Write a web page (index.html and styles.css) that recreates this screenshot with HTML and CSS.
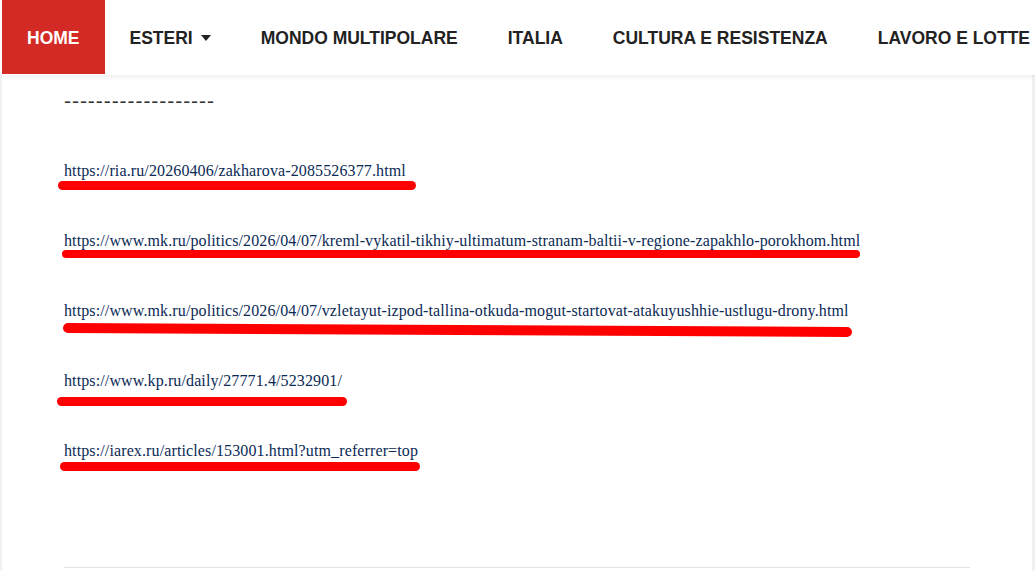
FILE: index.html
```html
<!DOCTYPE html>
<html lang="it">
<head>
    <meta charset="UTF-8">
    <meta name="viewport" content="width=device-width, initial-scale=1.0">
    <title>Fonti</title>
    <link rel="stylesheet" href="styles.css">
</head>
<body>
    <header class="topbar">
        <nav class="menu">
            <a class="menu-item active" href="#">HOME</a>
            <a class="menu-item" href="#">ESTERI <span class="caret"></span></a>
            <a class="menu-item" href="#">MONDO MULTIPOLARE</a>
            <a class="menu-item" href="#">ITALIA</a>
            <a class="menu-item" href="#">CULTURA E RESISTENZA</a>
            <a class="menu-item" href="#">LAVORO E LOTTE</a>
        </nav>
    </header>

    <main class="page">
        <article class="post">
            <p class="divider">-------------------</p>

            <ul class="sources">
                <li class="source">
                    <a href="#">https://ria.ru/20260406/zakharova-2085526377.html</a>
                    <span class="mark mark-1"></span>
                </li>
                <li class="source">
                    <a href="#">https://www.mk.ru/politics/2026/04/07/kreml-vykatil-tikhiy-ultimatum-stranam-baltii-v-regione-zapakhlo-porokhom.html</a>
                    <span class="mark mark-2"></span>
                </li>
                <li class="source">
                    <a href="#">https://www.mk.ru/politics/2026/04/07/vzletayut-izpod-tallina-otkuda-mogut-startovat-atakuyushhie-ustlugu-drony.html</a>
                    <span class="mark mark-3"></span>
                </li>
                <li class="source">
                    <a href="#">https://www.kp.ru/daily/27771.4/5232901/</a>
                    <span class="mark mark-4"></span>
                </li>
                <li class="source">
                    <a href="#">https://iarex.ru/articles/153001.html?utm_referrer=top</a>
                    <span class="mark mark-5"></span>
                </li>
            </ul>

            <hr class="post-end">
        </article>
    </main>
</body>
</html>
```

FILE: styles.css
```css
/* General Reset */
* {
    margin: 0;
    padding: 0;
    box-sizing: border-box;
}

body {
    font-family: 'Liberation Sans', Arial, sans-serif;
    background-color: #f1f1f4;
    color: #333;
    overflow: hidden;
}

/* Top menu */
.topbar {
    background: #fff;
    height: 75px;
    padding-left: 2px;
    box-shadow: 0 2px 5px rgba(0, 0, 0, 0.07);
    position: relative;
    z-index: 2;
}

.menu {
    display: flex;
    height: 74px;
    padding-top: 2px;
    white-space: nowrap;
    overflow: hidden;
}

.menu-item {
    display: flex;
    align-items: center;
    gap: 8px;
    padding: 0 25px;
    font-size: 17.5px;
    font-weight: 700;
    color: #222;
    text-decoration: none;
}

.menu-item.active {
    background: #d42a26;
    color: #fff;
    margin-top: -2px;
    padding-top: 2px;
}

.caret {
    width: 0;
    height: 0;
    border-left: 5px solid transparent;
    border-right: 5px solid transparent;
    border-top: 6px solid #222;
}

/* Content */
.page {
    background: #fff;
    margin: 0 3px 0 2px;
    min-height: 500px;
}

.post {
    margin: 0 62px;
    padding-top: 14px;
}

.divider {
    font-size: 21px;
    line-height: 24px;
    letter-spacing: 0.95px;
    color: #333;
    margin-bottom: 48px;
}

.sources {
    list-style: none;
}

.source {
    height: 70px;
}

.source a {
    display: block;
    font-family: 'Liberation Serif', 'Times New Roman', serif;
    font-size: 16px;
    line-height: 20px;
    letter-spacing: 0.12px;
    color: #0b2a55;
    text-decoration: none;
}

.mark {
    display: block;
    height: 9px;
    background: #ff0000;
    border-radius: 5px;
}

.mark-1 { width: 358px; margin: 0 0 0 -6px; }
.mark-2 { width: 798px; margin: -1px 0 0 -2px; height: 8px; }
.mark-3 { width: 789px; margin: 4px 0 0 -1px; height: 10px; transform: rotate(0.3deg); }
.mark-4 { width: 290px; margin: 6px 0 0 -7px; }
.mark-5 { width: 360px; margin: 1px 0 0 -4px; }

.post-end {
    border: none;
    border-top: 1px solid #e2e2e2;
    margin-top: 56px;
}
```
